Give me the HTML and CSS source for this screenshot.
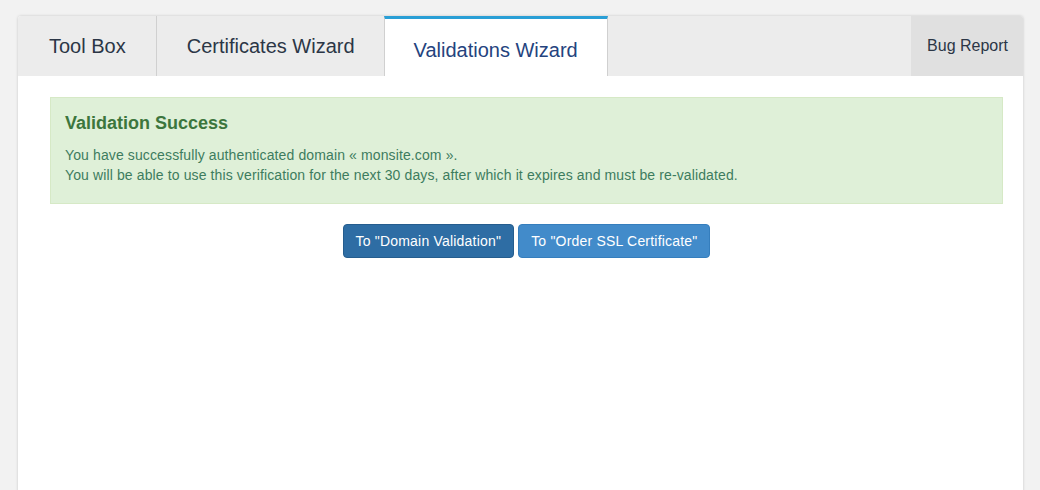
FILE: index.html
```html
<!DOCTYPE html>
<html>
<head>
<meta charset="utf-8">
<link rel="stylesheet" href="styles.css">
</head>
<body>
<div class="panel">
  <div class="tabs">
    <div class="tab tab-tool">Tool Box</div>
    <div class="tab tab-cert">Certificates Wizard</div>
    <div class="tab active">Validations Wizard</div>
    <div class="spacer"></div>
    <div class="tab bug">Bug Report</div>
  </div>
  <div class="content">
    <div class="alert">
      <h4 class="alert-title">Validation Success</h4>
      <p class="alert-line">You have successfully authenticated domain « monsite.com ».</p>
      <p class="alert-line">You will be able to use this verification for the next 30 days, after which it expires and must be re-validated.</p>
    </div>
    <div class="actions">
      <button class="btn btn-dark">To "Domain Validation"</button>
      <button class="btn btn-light">To "Order SSL Certificate"</button>
    </div>
  </div>
</div>
</body>
</html>
```
FILE: styles.css
```css
html, body {
  margin: 0;
  padding: 0;
  height: 100%;
}
body {
  background: #f2f2f2;
  font-family: "Liberation Sans", Arial, sans-serif;
  overflow: hidden;
}
.panel {
  margin: 16px 17px 0 18px;
  background: #fff;
  box-shadow: 0 0 3px rgba(0,0,0,0.18);
  border-radius: 3px 3px 0 0;
  min-height: 480px;
}
.tabs {
  display: flex;
  height: 60px;
  background: #ececec;
  border-radius: 3px 3px 0 0;
}
.tab {
  font-size: 20px;
  color: #2b3646;
  line-height: 60px;
  padding: 0 30px 0 31px;
  border-right: 1px solid #d0d0d0;
  white-space: nowrap;
}
.tab.tab-cert {
  padding: 0 29px 0 30px;
}
.tab.active {
  background: #fff;
  color: #24437e;
  border-top: 3px solid #2a9fd6;
  border-left: 1px solid #d0d0d0;
  border-right: 1px solid #d0d0d0;
  line-height: 63px;
  height: 57px;
  margin-left: -1px;
  padding: 0 29px 0 29px;
}
.spacer {
  flex: 1;
}
.tab.bug {
  background: #e0e0e0;
  font-size: 16px;
  line-height: 60px;
  padding: 0 15px 0 16px;
  border-right: none;
  border-radius: 0 3px 0 0;
}
.content {
  padding: 21px 20px 20px 32px;
}
.alert {
  background: #dff0d8;
  border: 1px solid #d6e9c6;
  padding: 15px 14px 18px 14px;
  color: #3c763d;
}
.alert-title {
  margin: 0 0 12px 0;
  font-size: 18px;
  font-weight: bold;
  line-height: 20px;
  color: #3c763d;
}
.alert-line {
  margin: 0;
  font-size: 14px;
  line-height: 20px;
  letter-spacing: 0.12px;
  color: #3d7c5e;
}
.actions {
  display: flex;
  justify-content: center;
  gap: 4px;
  margin-top: 20px;
}
.btn {
  font-family: "Liberation Sans", Arial, sans-serif;
  font-size: 14px;
  letter-spacing: 0.2px;
  color: #fff;
  height: 34px;
  padding: 0 12px;
  border-radius: 4px;
  cursor: pointer;
}
.btn-dark {
  background: #2e6da4;
  border: 1px solid #255d8e;
}
.btn-light {
  background: #428bca;
  border: 1px solid #357ebd;
}
```
